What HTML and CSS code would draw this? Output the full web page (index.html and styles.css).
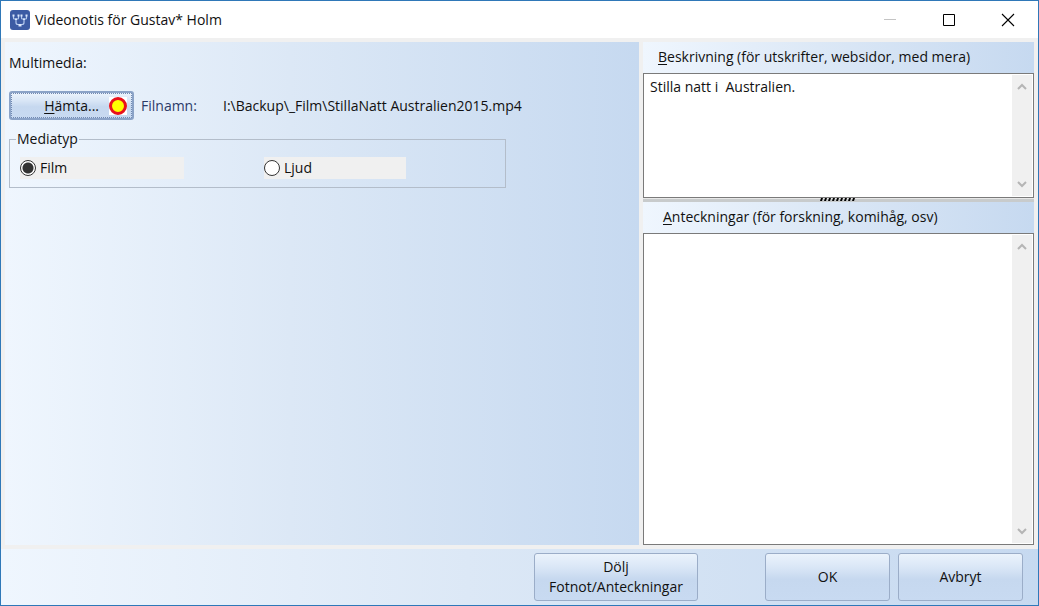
FILE: index.html
```html
<!DOCTYPE html>
<html lang="sv">
<head>
<meta charset="utf-8">
<title>Videonotis för Gustav* Holm</title>
<link rel="stylesheet" href="styles.css">
</head>
<body>
<div class="window">
  <header class="titlebar">
    <svg class="app-icon" viewBox="0 0 20 20" aria-hidden="true">
      <rect width="20" height="20" rx="3" fill="#3c5ba4"/>
      <g fill="none" stroke="#b4c9ee" stroke-width="1.200">
        <path d="M3.500 6v2q0 1 1 1h3q1 0 1-1V6M11.500 6v2q0 1 1 1h3q1 0 1-1V6M6 9v3.500q0 2 2 2h4q2 0 2-2V9"/>
      </g>
      <path d="M2.500 4.500h2v2h-2zM7.500 4.500h2v2h-2zM10.500 4.500h2v2h-2zM15.500 4.500h2v2h-2zM5 8.500h2v1.500H5zM13 8.500h2v1.500h-2zM8.500 14h3v2.500h-3z" fill="#dce8fc"/>
    </svg>
    <h1 class="title">Videonotis för Gustav* Holm</h1>
    <button class="caption" type="button" aria-label="Minimera" disabled><svg viewBox="0 0 14 14"><path d="M1 6.500h12" stroke="#c4c4c4"/></svg></button>
    <button class="caption" type="button" aria-label="Maximera"><svg viewBox="0 0 14 14"><path d="M1.500 1.500h11v11h-11z" fill="none" stroke="#000"/></svg></button>
    <button class="caption" type="button" aria-label="Stäng"><svg viewBox="0 0 14 14"><path d="M1 1l12 12M13 1L1 13" stroke="#000" stroke-width="1.100"/></svg></button>
  </header>

  <main class="content">
    <section class="media">
      <h2 class="heading">Multimedia:</h2>
      <div class="file-row">
        <button class="btn fetch" type="button"><span><u>H</u>ämta...</span>
          <svg class="record" viewBox="0 0 18 18" aria-hidden="true"><rect width="18" height="18" fill="#fff"/><circle cx="9" cy="9" r="7.500" fill="#ff0" stroke="#e8121c" stroke-width="3"/></svg>
        </button>
        <span class="file-label">Filnamn:</span>
        <span class="file-name">I:\Backup\_Film\StillaNatt Australien2015.mp4</span>
      </div>
      <fieldset class="group">
        <legend>Mediatyp</legend>
        <label class="choice film"><input type="radio" name="type" checked>Film</label>
        <label class="choice sound"><input type="radio" name="type">Ljud</label>
      </fieldset>
    </section>

    <section class="notes">
      <label class="note-label" for="description"><span><u>B</u>eskrivning (för utskrifter, websidor, med mera)</span></label>
      <div class="memo short">
        <textarea id="description">Stilla natt i  Australien.</textarea>
        <div class="scroll" aria-hidden="true">
          <svg viewBox="0 0 10 7"><path d="M1 6l4-4 4 4"/></svg>
          <svg viewBox="0 0 10 7"><path d="M1 1l4 4 4-4"/></svg>
        </div>
      </div>
      <div class="splitter">
        <svg class="grip" viewBox="0 0 36 3" aria-hidden="true"><path d="M1 0h2L2 3H0zm4 0h2L6 3H4zm4 0h2l-1 3H8zm4 0h2l-1 3h-2zm4 0h2l-1 3h-2zm4 0h2l-1 3h-2zm4 0h2l-1 3h-2zm4 0h2l-1 3h-2zm4 0h2l-1 3h-2z" fill="#000"/></svg>
      </div>
      <label class="note-label second" for="remarks"><span><u>A</u>nteckningar (för forskning, komihåg, osv)</span></label>
      <div class="memo">
        <textarea id="remarks"></textarea>
        <div class="scroll" aria-hidden="true">
          <svg viewBox="0 0 10 7"><path d="M1 6l4-4 4 4"/></svg>
          <svg viewBox="0 0 10 7"><path d="M1 1l4 4 4-4"/></svg>
        </div>
      </div>
    </section>
  </main>

  <footer class="actions">
    <button class="btn toggle" type="button">Dölj<br>Fotnot/Anteckningar</button>
    <button class="btn action" type="button">OK</button>
    <button class="btn action" type="button">Avbryt</button>
  </footer>
</div>
</body>
</html>
```
FILE: styles.css
```css
* { box-sizing: border-box; }

body {
  margin: 0;
  font: 14px/20px "Open Sans", "Noto Sans", sans-serif;
  color: #111;
}

button, textarea { font: inherit; color: inherit; }

u { text-underline-offset: 2px; }

.window {
  display: flex;
  flex-direction: column;
  min-height: 100vh;
  border: 1px solid #2f78b8;
  background: #f0f0f0;
}

.titlebar {
  display: flex;
  align-items: center;
  height: 37px;
  padding: 0 1px 0 9px;
  background: #fff;
}

.app-icon { width: 20px; height: 20px; }

.title {
  flex: 1;
  margin: 0 0 0 5px;
  font-size: 14px;
  font-weight: 400;
}

.caption {
  display: flex;
  align-items: center;
  justify-content: center;
  width: 59px;
  height: 36px;
  padding: 0;
  border: 0;
  background: none;
}

.caption svg { width: 14px; height: 14px; }

.content {
  flex: 1;
  display: flex;
  gap: 4px;
  padding: 4px;
}

.media {
  flex: 1;
  padding: 11px 4px;
  background: linear-gradient(90deg, #eff6fe, #dce8f6 45%, #c6d9f0);
}

.heading {
  margin: 0 0 18px;
  font-size: 14px;
  font-weight: 400;
}

.file-row { display: flex; align-items: center; }

.btn {
  padding: 0;
  border: 1px solid #9badc8;
  border-radius: 3px;
  background: linear-gradient(#ebf3fc 0%, #d9e6f6 30%, #c6d8ef 55%, #c8daf1 100%);
}

.fetch {
  display: flex;
  align-items: center;
  justify-content: flex-end;
  gap: 10px;
  width: 125px;
  height: 29px;
  padding-right: 5px;
  border: 2px solid #8ba3c7;
  outline: 1px dotted #7189b2;
  outline-offset: -3px;
}

.record { width: 18px; height: 18px; }

.file-label { width: 82px; margin-left: 7px; color: #2c3b68; }

.group {
  display: flex;
  width: 497px;
  max-width: 100%;
  height: 59px;
  margin: 9px 0 0;
  padding: 8px 10px;
  border: 1px solid #b3bdca;
}

.group legend { padding: 0 1px; margin-left: -4px; }

.choice {
  display: flex;
  align-items: center;
  gap: 4px;
  height: 22px;
  background: #f0f0f0;
}

.film { width: 164px; margin-right: 80px; }
.sound { width: 142px; }

.choice input {
  appearance: none;
  width: 16px;
  height: 16px;
  margin: 0;
  border: 1px solid #333;
  border-radius: 50%;
  background: #fff;
}

.choice input:checked { background: radial-gradient(circle, #333 5px, #fff 6px); }

.notes {
  width: 38%;
  display: flex;
  flex-direction: column;
}

.note-label {
  height: 31px;
  padding: 5px 15px;
  background: linear-gradient(90deg, #eff6fe, #dce8f6 45%, #c6d9f0);
}

.second { padding-left: 20px; }

.memo {
  flex: 1;
  display: flex;
  border: 1px solid #7a7a7a;
  background: #fff;
}

.short { flex: 0 0 125px; }

.memo textarea {
  flex: 1;
  min-width: 0;
  padding: 3px 6px;
  border: 0;
  outline: 0;
  resize: none;
  background: none;
}

.scroll {
  display: flex;
  flex-direction: column;
  justify-content: space-between;
  align-items: center;
  width: 20px;
  margin: 1px;
  padding: 8px 0;
  background: #f0f0f0;
}

.scroll svg {
  width: 10px;
  height: 7px;
  fill: none;
  stroke: #b5b5b5;
  stroke-width: 2;
}

.splitter {
  display: flex;
  justify-content: center;
  height: 4px;
  background: linear-gradient(#e8e8e8 1px, #c8cbcc 1px, #c8cbcc);
}

.grip { width: 36px; height: 3px; }

.actions {
  display: flex;
  justify-content: flex-end;
  gap: 8px;
  height: 56px;
  padding: 4px 15px;
  background: linear-gradient(90deg, #eff6fe, #dce8f6 45%, #c6d9f0);
}

.toggle { width: 164px; margin-right: 59px; }
.action { width: 125px; }
```
